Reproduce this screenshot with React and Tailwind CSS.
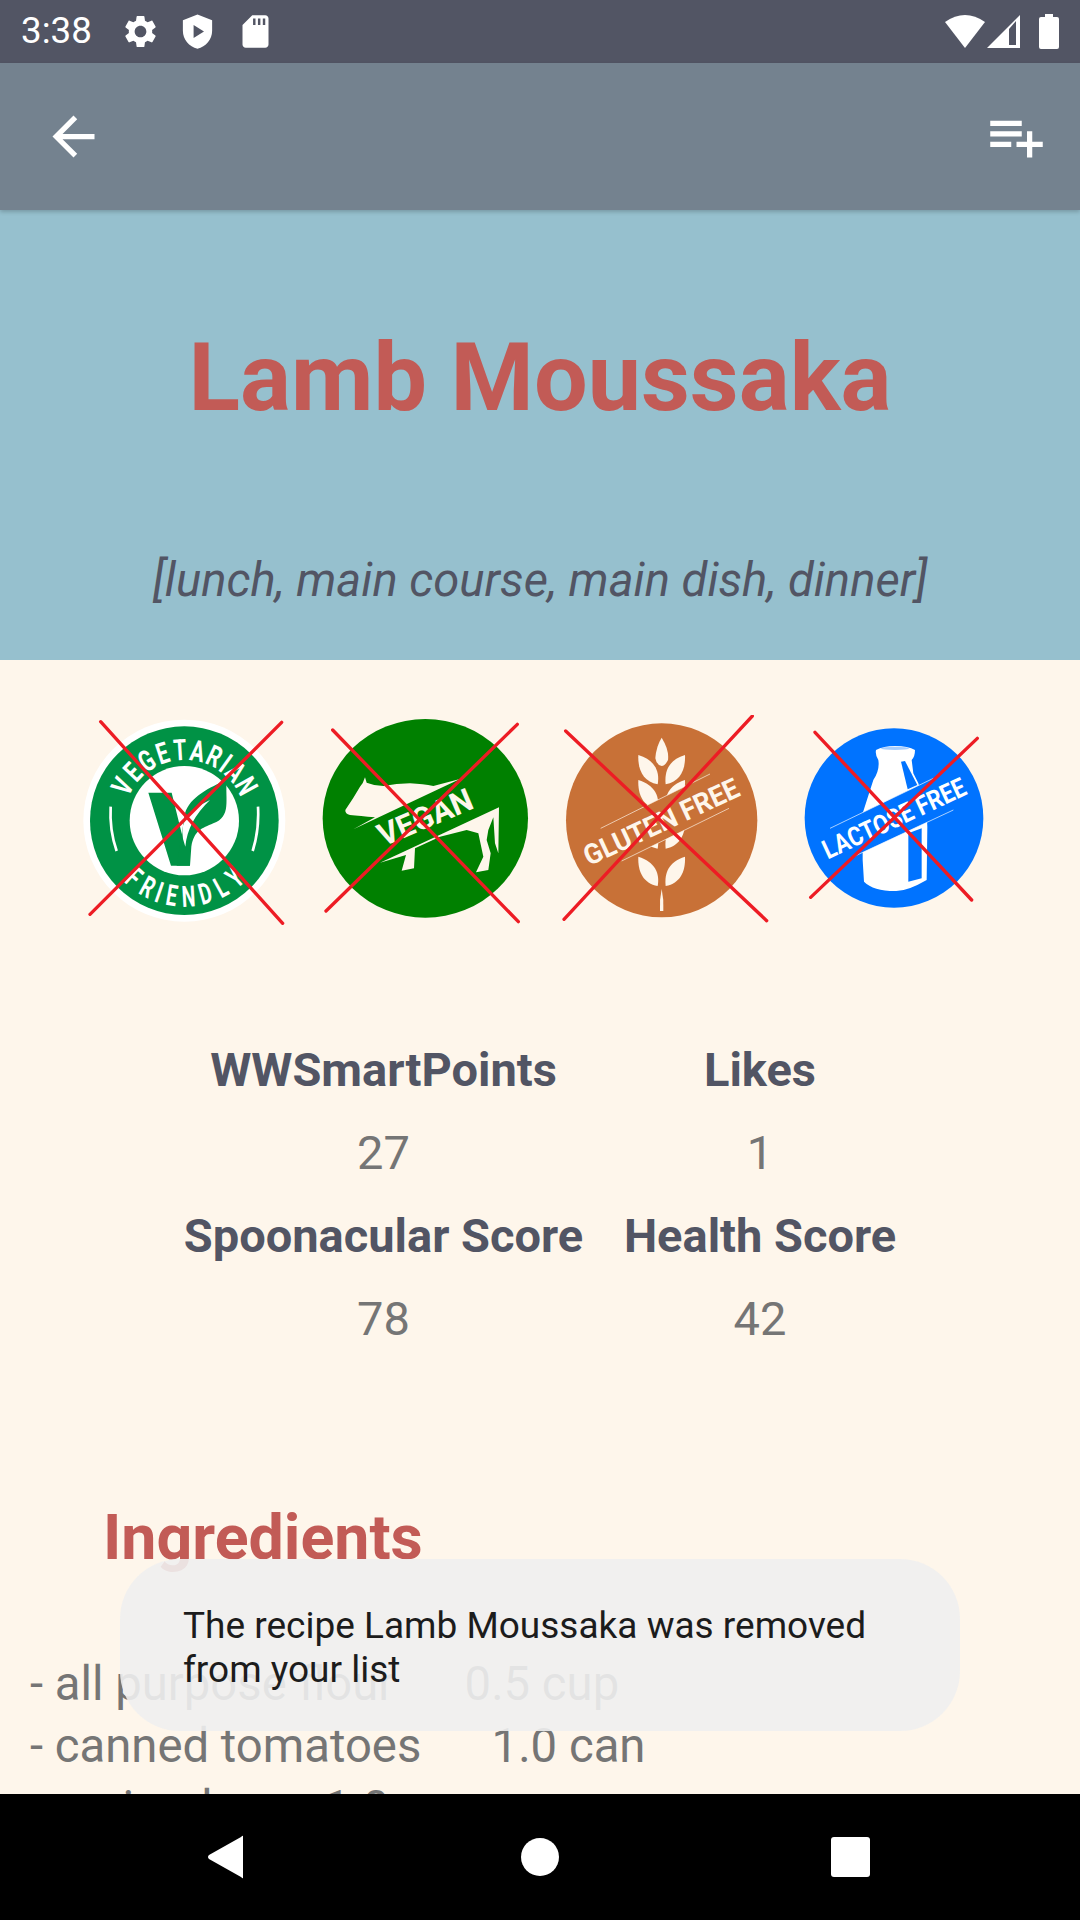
const RED = "#ed1c24";
const BADGE_FONT = "Roboto, sans-serif";

function Cross({ lines }) {
  return (
    <g stroke={RED} strokeWidth="10" strokeLinecap="round">
      {lines.map((l, i) => (
        <line key={i} x1={l[0]} y1={l[1]} x2={l[2]} y2={l[3]} />
      ))}
    </g>
  );
}

// one squeezed letter after another round a circle; Roboto has no condensed cut here
function ArcText({ text, cx, cy, r, from, to, size, squeeze, flip }) {
  const letters = text.split("");
  const weights = letters.map((c) => (c === "I" ? 0.5 : 1));
  const total = weights.reduce((a, b) => a + b, 0);
  let run = 0;
  return letters.map((c, i) => {
    const mid = (run + weights[i] / 2) / total;
    run += weights[i];
    const deg = from + (to - from) * mid;
    const rad = (deg * Math.PI) / 180;
    const x = cx + r * Math.sin(rad);
    const y = cy - r * Math.cos(rad);
    const rot = flip ? deg + 180 : deg;
    return (
      <text
        key={i}
        transform={`translate(${x} ${y}) rotate(${rot}) scale(${squeeze} 1)`}
        textAnchor="middle"
        fill="#fff"
        fontFamily={BADGE_FONT}
        fontWeight="700"
        fontSize={size}
      >
        {c}
      </text>
    );
  });
}

function BandText({ x, y, angle, length, size, fill, children }) {
  return (
    <text
      transform={`rotate(${angle} ${x} ${y})`}
      x={x}
      y={y}
      textAnchor="middle"
      fill={fill}
      fontFamily={BADGE_FONT}
      fontWeight="700"
      fontSize={size}
      textLength={length}
      lengthAdjust="spacingAndGlyphs"
    >
      {children}
    </text>
  );
}

// badge drawings use coordinates 3x the screen
function VegetarianBadge() {
  return (
    <svg className="w-[210px] h-[210px] shrink-0" viewBox="30 45 630 630">
      <circle cx="343" cy="362" r="303" fill="#fff" />
      <circle cx="343" cy="362" r="283" fill="#009245" />
      <circle cx="343" cy="362" r="164" fill="#fff" />
      <ArcText text="VEGETARIAN" cx={343} cy={362} r={182} from={-68} to={68} size={88} squeeze={0.72} />
      <ArcText text="FRIENDLY" cx={343} cy={362} r={258} from={228} to={132} size={88} squeeze={0.66} flip />
      <path d="M122 320 Q118 390 140 453" fill="none" stroke="#fff" strokeWidth="8" />
      <path d="M564 320 Q568 390 548 453" fill="none" stroke="#fff" strokeWidth="8" />
      <path d="M235 278 L305 278 L345 440 L360 497 L303 497 Z" fill="#009245" />
      <path
        d="M470 240 C465 300 485 350 430 370 C395 385 372 392 364 440 L360 497 L320 497 L345 340 C360 290 420 262 470 240 Z"
        fill="#009245"
      />
      <path d="M420 300 Q352 365 346 440 Q328 395 345 360 Q365 325 420 300 Z" fill="#fff" />
      <Cross lines={[[92, 65, 638, 670], [635, 67, 60, 643]]} />
    </svg>
  );
}

function VeganBadge() {
  return (
    <svg className="w-[210px] h-[210px] shrink-0" viewBox="750 45 630 630">
      <ellipse cx="1066" cy="355" rx="308" ry="298" fill="#008000" />
      <g fill="#fef6eb">
        <path d="M885 232 L890 248 Q915 258 940 258 Q980 250 1020 250 Q1060 252 1090 258 L1170 237 L850 388 L915 352 Q870 348 840 345 Q825 342 826 330 Q850 295 870 260 Q880 250 885 232 Z" />
        <path d="M930 488 L1287 322 L1285 460 L1275 430 L1270 352 L1255 390 L1250 420 L1262 460 L1255 510 L1218 517 L1240 470 L1225 400 L1190 390 L1110 410 L1035 445 L1032 505 L995 512 L1008 465 Z" />
      </g>
      <BandText x={1078} y={382} angle={-23} length={300} size={94} fill="#fef6eb">
        VEGAN
      </BandText>
      <Cross lines={[[788, 90, 1345, 665], [1342, 73, 768, 633]]} />
    </svg>
  );
}

const WHEAT_ROWS = [165, 240, 358, 470];

function GlutenBadge() {
  return (
    <svg className="w-[210px] h-[210px] shrink-0" viewBox="60 45 630 630">
      <ellipse cx="365" cy="361" rx="287" ry="291" fill="#c87137" />
      <g fill="#fef6eb">
        <path d="M365 113 Q388 150 384 180 Q375 198 365 198 Q350 195 346 175 Q348 140 365 113 Z" />
        {WHEAT_ROWS.map((y) => (
          <g key={y} transform={`translate(365 ${y})`}>
            <path d="M-70 0 C-20 15 -5 50 -12 88 C-55 80 -72 45 -70 0 Z" />
            <path d="M70 0 C20 15 8 50 12 88 C55 80 72 45 70 0 Z" />
          </g>
        ))}
        <path d="M365 567 Q372 600 370 633 L360 633 Q358 600 365 567 Z" />
      </g>
      <path d="M182 385 L510 222 L567 325 L245 483 Z" fill="#c87137" />
      <g stroke="#fef6eb" strokeWidth="2" fill="none">
        <line x1="182" y1="385" x2="510" y2="222" />
        <line x1="245" y1="483" x2="567" y2="325" />
      </g>
      <BandText x={376} y={392} angle={-25} length={505} size={84} fill="#fef6eb">
        GLUTEN FREE
      </BandText>
      <Cross lines={[[77, 93, 680, 662], [637, 48, 72, 658]]} />
    </svg>
  );
}

function LactoseBadge() {
  return (
    <svg className="w-[190px] h-[210px] shrink-0" viewBox="780 45 570 630">
      <ellipse cx="1062" cy="354" rx="268" ry="269" fill="#0073ff" />
      <path
        d="M1008 150 Q1030 138 1065 138 Q1105 138 1125 150 Q1125 170 1115 180 L1120 220 L1135 250 L1160 340 L1162 380 L1160 540 Q1100 575 1065 573 Q1000 573 972 545 L968 480 L968 340 L1000 240 Q1020 210 1015 180 Q1005 165 1008 150 Z"
        fill="#fff"
      />
      <ellipse cx="1065" cy="145" rx="42" ry="5" fill="#0073ff" opacity="0.35" />
      <path d="M1083 185 L1095 183 L1132 255 L1103 268 Z" fill="#0073ff" />
      <path d="M1105 400 L1145 385 L1145 535 L1105 545 Z" fill="#0073ff" />
      <path d="M870 385 L1180 235 L1240 330 L930 475 Z" fill="#0073ff" />
      <g stroke="#fff" strokeWidth="2" fill="none">
        <line x1="870" y1="385" x2="1180" y2="235" />
        <line x1="930" y1="475" x2="1240" y2="330" />
      </g>
      <BandText x={1074} y={380} angle={-25} length={465} size={80} fill="#fff">
        LACTOSE FREE
      </BandText>
      <Cross lines={[[825, 97, 1295, 600], [1312, 115, 812, 592]]} />
    </svg>
  );
}

function Icon({ d, size = "w-[39px] h-[39px]" }) {
  return (
    <svg className={`${size} shrink-0`} viewBox="0 0 24 24" fill="#fff">
      <path d={d} />
    </svg>
  );
}

const STATS = [
  ["WWSmartPoints", "27", "Likes", "1"],
  ["Spoonacular Score", "78", "Health Score", "42"],
];

export default function App() {
  return (
    <div
      className="relative w-[1080px] h-[1920px] overflow-hidden flex flex-col bg-[#fef6eb]"
      style={{ fontFamily: "Roboto, sans-serif" }}
    >
      {/* Status bar */}
      <div className="h-[63px] shrink-0 bg-[#525564] flex items-center text-white pl-[21px] pr-[20px]">
        <span className="text-[36.75px] leading-none">3:38</span>
        <div className="flex items-center ml-[29px] gap-[18.5px]">
          <Icon d="M19.14 12.94c.04-.3.06-.61.06-.94 0-.32-.02-.64-.07-.94l2.03-1.58c.18-.14.23-.41.12-.61l-1.92-3.32c-.12-.22-.37-.29-.59-.22l-2.39.96c-.5-.38-1.03-.7-1.62-.94l-.36-2.54c-.04-.24-.24-.41-.48-.41h-3.84c-.24 0-.43.17-.47.41l-.36 2.54c-.59.24-1.13.57-1.62.94l-2.39-.96c-.22-.08-.47 0-.59.22L2.74 8.87c-.12.21-.08.47.12.61l2.03 1.58c-.05.3-.09.63-.09.94s.02.64.07.94l-2.03 1.58c-.18.14-.23.41-.12.61l1.92 3.32c.12.22.37.29.59.22l2.39-.96c.5.38 1.03.7 1.62.94l.36 2.54c.05.24.24.41.48.41h3.84c.24 0 .44-.17.47-.41l.36-2.54c.59-.24 1.13-.56 1.62-.94l2.39.96c.22.08.47 0 .59-.22l1.92-3.32c.12-.22.07-.47-.12-.61l-2.01-1.58zM12 15.6c-1.98 0-3.6-1.62-3.6-3.6s1.62-3.6 3.6-3.6 3.6 1.62 3.6 3.6-1.62 3.6-3.6 3.6z" />
          <Icon d="M12 1.6 L21 5 V11.5 C21 16.8 17.2 21.3 12 22.6 C6.8 21.3 3 16.8 3 11.5 V5 Z M9.6 8 V16 L16 12 Z" />
          <Icon d="M18 2h-8L4 8v12c0 1.1.9 2 2 2h12c1.1 0 2-.9 2-2V4c0-1.1-.9-2-2-2zm-6 6h-1.5V4H12v4zm3 0h-1.5V4H15v4zm3 0h-1.5V4H18v4z" />
        </div>
        <div className="flex items-center ml-auto">
          <svg className="w-[42px] h-[39px] shrink-0" viewBox="0 0 42 39" fill="#fff">
            <path d="M1 10 Q21 -4 41 10 L21 36 Z" />
          </svg>
          <svg className="w-[35px] h-[39px] shrink-0" viewBox="0 0 35 39" fill="#fff" fillRule="evenodd">
            <path d="M1 36 L34 3 V36 Z M23 17 V33 H30 V9 Z" />
          </svg>
          <svg className="w-[22px] h-[39px] shrink-0 ml-[17px]" viewBox="0 0 22 39" fill="#fff">
            <path d="M7 2 H15 V5 H19 Q21 5 21 7 V35 Q21 37 19 37 H3 Q1 37 1 35 V7 Q1 5 3 5 H7 Z" />
          </svg>
        </div>
      </div>

      {/* App bar */}
      <div className="relative z-10 h-[147px] shrink-0 bg-[#74828f] shadow-[0_2px_4px_rgba(0,0,0,0.2)] flex items-center justify-between pl-[42px] pr-[32px]">
        <Icon size="w-[63px] h-[63px]" d="M20 11H7.83l5.59-5.59L12 4l-8 8 8 8 1.41-1.41L7.83 13H20v-2z" />
        <Icon size="w-[63px] h-[63px]" d="M14 10H2v2h12v-2zm0-4H2v2h12V6zm4 8v-4h-2v4h-4v2h4v4h2v-4h4v-2h-4zM2 16h8v-2H2v2z" />
      </div>

      {/* Recipe header */}
      <div className="h-[450px] shrink-0 bg-[#96c0ce] flex flex-col items-center pt-[112px]">
        <h1 className="text-[95.2px] leading-[112px] font-bold text-[#c25b56]">Lamb Moussaka</h1>
        <p className="mt-[118px] text-[47.2px] leading-[56px] italic text-[#525564]">
          [lunch, main course, main dish, dinner]
        </p>
      </div>

      <div className="flex-1 min-h-0 overflow-hidden">
        {/* Diet badges */}
        <div className="flex gap-[30px] pl-[80px] pt-[55px]">
          <VegetarianBadge />
          <VeganBadge />
          <GlutenBadge />
          <LactoseBadge />
        </div>

        {/* Stats */}
        <div className="mt-[102.5px] ml-[183px] grid grid-cols-[401px_352px] text-center text-[47px] whitespace-nowrap">
          {STATS.map((row) => [
            <div key={row[0]} className="h-[83px] leading-[83px] font-bold text-[#525564]">{row[0]}</div>,
            <div key={row[2]} className="h-[83px] leading-[83px] font-bold text-[#525564]">{row[2]}</div>,
            <div key={row[1]} className="h-[83px] leading-[83px] text-[#757575]">{row[1]}</div>,
            <div key={row[3]} className="h-[83px] leading-[83px] text-[#757575]">{row[3]}</div>,
          ])}
        </div>

        {/* Ingredients */}
        <h2 className="mt-[141px] ml-[103px] text-[62.7px] leading-[74px] font-bold text-[#c25b56]">Ingredients</h2>
        <div className="mt-[78px] ml-[30px] text-[47.25px] leading-[62px] text-[#757575] whitespace-pre">
          <div>- all purpose flour      0.5 cup</div>
          <div>- canned tomatoes      1.0 can</div>
          <div>- coriander      1.0</div>
        </div>
      </div>

      {/* Nav bar */}
      <div className="h-[126px] shrink-0 bg-black flex items-center pl-[207px]">
        <svg className="w-[36px] h-[44px] shrink-0" viewBox="0 0 36 44" fill="#fff">
          <path d="M36 1 V43 Q36 44 34 42 L2 24 Q0 22 2 20 L34 2 Q36 0 36 1 Z" />
        </svg>
        <div className="w-[38px] h-[38px] ml-[278px] rounded-full bg-white shrink-0" />
        <div className="w-[39px] h-[40px] ml-[272px] rounded-[3px] bg-white shrink-0" />
      </div>

      {/* Toast */}
      <div className="absolute left-[120px] top-[1559px] w-[840px] h-[172px] rounded-[60px] bg-[#efefef]/90 flex items-center pl-[63px] pr-[64px]">
        <p className="pt-[6px] text-[37px] leading-[44px] text-[#1c1c1c]">
          The recipe Lamb Moussaka was removed from your list
        </p>
      </div>
    </div>
  );
}
